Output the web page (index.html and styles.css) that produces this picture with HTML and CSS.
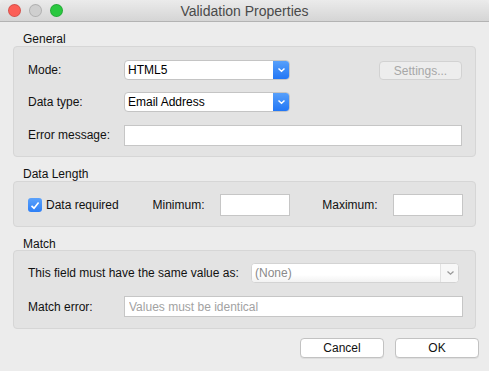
FILE: index.html
```html
<!DOCTYPE html>
<html lang="en">
<head>
    <meta charset="UTF-8">
    <title>Validation Properties</title>
    <link rel="stylesheet" href="styles.css">
</head>
<body>
    <div class="window">
        <div class="titlebar">
            <div class="lights">
                <span class="light close"></span>
                <span class="light minimize"></span>
                <span class="light zoom"></span>
            </div>
            <div class="title">Validation Properties</div>
        </div>

        <div class="content">
            <div class="group-label">General</div>
            <div class="group general">
                <label class="field-label">Mode:</label>
                <div class="select">
                    <span class="select-value">HTML5</span>
                    <span class="select-arrow">
                        <svg width="9" height="6" viewBox="0 0 9 6"><path d="M1.5 1.5 L4.5 4.2 L7.5 1.5" fill="none" stroke="#fff" stroke-width="1.5"/></svg>
                    </span>
                </div>
                <span></span>
                <button class="btn settings-btn" disabled>Settings...</button>

                <label class="field-label">Data type:</label>
                <div class="select">
                    <span class="select-value">Email Address</span>
                    <span class="select-arrow">
                        <svg width="9" height="6" viewBox="0 0 9 6"><path d="M1.5 1.5 L4.5 4.2 L7.5 1.5" fill="none" stroke="#fff" stroke-width="1.5"/></svg>
                    </span>
                </div>
                <span></span>
                <span></span>

                <label class="field-label">Error message:</label>
                <input class="text-input wide" type="text">
            </div>

            <div class="group-label">Data Length</div>
            <div class="group length">
                <div class="check">
                    <span class="checkbox">
                        <svg width="10" height="9" viewBox="0 0 10 9"><path d="M1.5 4.8 L4 7.2 L8.6 1.4" fill="none" stroke="#fff" stroke-width="1.6"/></svg>
                    </span>
                    <span>Data required</span>
                </div>
                <label class="len-label min-label">Minimum:</label>
                <input class="text-input len-input" type="text">
                <label class="len-label max-label">Maximum:</label>
                <input class="text-input len-input" type="text">
            </div>

            <div class="group-label match-label">Match</div>
            <div class="group match">
                <div class="match-row">
                    <label class="same-label">This field must have the same value as:</label>
                    <div class="select disabled">
                        <span class="select-value">(None)</span>
                        <span class="select-arrow">
                            <svg width="9" height="6" viewBox="0 0 9 6"><path d="M1.5 1.5 L4.5 4.2 L7.5 1.5" fill="none" stroke="#9a9a9a" stroke-width="1.3"/></svg>
                        </span>
                    </div>
                </div>
                <div class="match-row second">
                    <label class="field-label">Match error:</label>
                    <input class="text-input match-input" type="text" placeholder="Values must be identical">
                </div>
            </div>

            <div class="actions">
                <button class="btn">Cancel</button>
                <button class="btn ok-btn">OK</button>
            </div>
        </div>
    </div>
</body>
</html>
```

FILE: styles.css
```css
body {
    margin: 0;
    padding: 0;
    font-family: 'Liberation Sans', Arial, sans-serif;
    font-size: 12px;
    color: #111;
    background-color: #ececec;
}
.window {
    width: 489px;
    height: 371px;
    background-color: #ececec;
    border-radius: 5px 5px 0 0;
    overflow: hidden;
}
.titlebar {
    height: 21px;
    display: flex;
    align-items: center;
    position: relative;
    background: linear-gradient(#ebebeb, #d5d5d5);
    border-bottom: 1px solid #b3b3b3;
}
.lights {
    display: flex;
    gap: 8px;
    padding-left: 8px;
}
.light {
    width: 11px;
    height: 11px;
    border-radius: 50%;
    border: 0.5px solid rgba(0,0,0,0.15);
}
.close {
    background-color: #fc5f57;
}
.minimize {
    background-color: #cfcfcf;
}
.zoom {
    background-color: #2ac840;
}
.title {
    position: absolute;
    left: 0;
    right: 0;
    text-align: center;
    font-size: 14px;
    color: #4a4a4a;
    pointer-events: none;
}
.content {
    padding: 0 13px;
}
.group-label {
    height: 14px;
    line-height: 14px;
    padding: 10px 0 0 10px;
    color: #111;
}
.match-label {
    height: 13px;
}
.group {
    background-color: #e3e3e3;
    border: 1px solid #d6d6d6;
    border-radius: 4px;
}
/* General box */
.general {
    display: grid;
    grid-template-columns: 96px 166px 1fr 83px;
    grid-template-rows: 20px 20px 21px;
    row-gap: 12px;
    padding: 13px 13px 11px 14px;
    align-items: center;
}
.general .wide {
    grid-column: 2 / -1;
    margin-top: 1px;
}
.field-label {
    color: #111;
}
.select {
    height: 20px;
    box-sizing: border-box;
    display: flex;
    align-items: center;
    background-color: #fff;
    border: 1px solid #c4c4c4;
    border-radius: 4px;
    overflow: hidden;
}
.select-value {
    flex: 1;
    padding-left: 3px;
    font-size: 12px;
    color: #000;
}
.select-arrow {
    width: 17px;
    height: 20px;
    display: flex;
    align-items: center;
    justify-content: center;
    background: linear-gradient(#5aa2fb, #1f74f5);
    margin-right: -1px;
}
.select.disabled {
    border-color: #d3d3d3;
}
.select.disabled .select-value {
    color: #8a8a8a;
    background: linear-gradient(#fff 0, #fff 60%, #f2f2f2 100%);
    height: 100%;
    line-height: 18px;
}
.select.disabled .select-arrow {
    background: #f7f7f7;
    border-left: 1px solid #e2e2e2;
    width: 18px;
}
.btn {
    height: 20px;
    font-family: 'Liberation Sans', Arial, sans-serif;
    font-size: 12px;
    color: #111;
    background-color: #fff;
    border: 1px solid #c2c2c2;
    border-radius: 4px;
    padding: 0;
    box-shadow: 0 1px 0 rgba(0,0,0,0.06);
}
.settings-btn {
    height: 19px;
    align-self: start;
    margin-top: 1px;
    color: #a7a7a7;
    background-color: #ededed;
    border-color: #d2d2d2;
    box-shadow: none;
}
.text-input {
    height: 21px;
    box-sizing: border-box;
    border: 1px solid #c6c6c6;
    background-color: #fff;
    padding: 0 4px;
    font-family: 'Liberation Sans', Arial, sans-serif;
    font-size: 12px;
    outline: none;
}
.text-input::placeholder {
    color: #a2a2a2;
}
/* Data Length box */
.length {
    display: flex;
    align-items: center;
    padding: 12px 12px 10px 14px;
}
.check {
    width: 125px;
    display: flex;
    align-items: center;
    gap: 4px;
}
.checkbox {
    width: 14px;
    height: 14px;
    border-radius: 3px;
    background: linear-gradient(#5ba2fb, #2d7ff6);
    display: flex;
    align-items: center;
    justify-content: center;
}
.len-label {
    width: 68px;
}
.max-label {
    width: 71px;
    margin-left: 32px;
}
.len-input {
    width: 70px;
    height: 22px;
}
/* Match box */
.match {
    padding: 12px 12px 11px 14px;
}
.match-row {
    display: flex;
    align-items: center;
}
.match-row.second {
    margin-top: 13px;
}
.same-label {
    width: 223px;
}
.match .select {
    width: 208px;
}
.match .field-label {
    width: 96px;
}
.match-input {
    flex: 1;
}
.actions {
    display: flex;
    justify-content: flex-end;
    gap: 11px;
    padding: 9px 0 0;
    margin-right: -3px;
}
.actions .btn {
    width: 84px;
}
```
